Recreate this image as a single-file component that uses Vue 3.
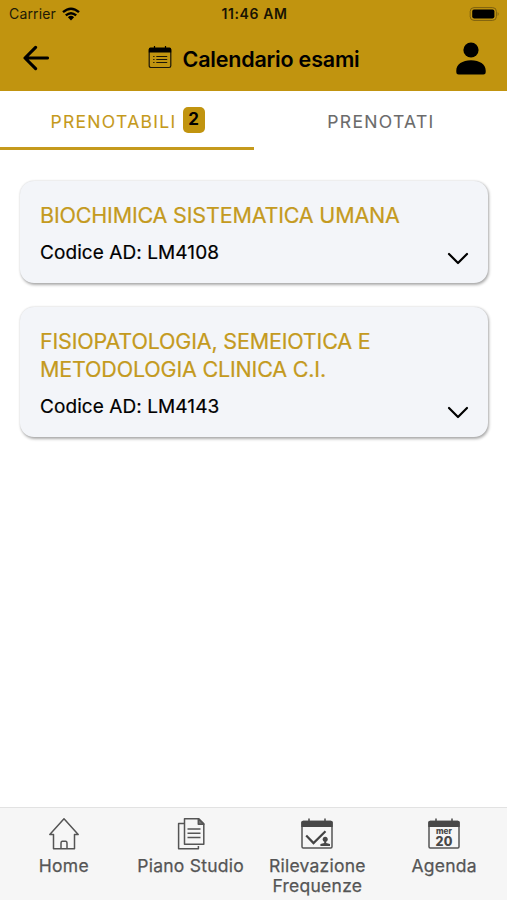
<script setup>
const exams = [
  { title: ['BIOCHIMICA SISTEMATICA UMANA'], code: 'LM4108' },
  { title: ['FISIOPATOLOGIA, SEMEIOTICA E', 'METODOLOGIA CLINICA C.I.'], code: 'LM4143' },
]
</script>

<template>
  <div class="screen">
    <header class="top">
      <div class="status">
        <div class="carrier">
          <span>Carrier</span>
          <svg width="18" height="14" viewBox="0 0 18 14" fill="none" stroke="#000" stroke-width="2.4">
            <path d="M1 5.2Q9-1.8 17 5.2" />
            <path d="M3.8 8.4Q9 3.9 14.2 8.4" />
            <path d="M9 13.4 5.9 10.2Q9 7.5 12.1 10.2Z" fill="#000" stroke="none" />
          </svg>
        </div>
        <span class="time">11:46 AM</span>
        <svg class="battery" width="31" height="14" viewBox="0 0 31 14">
          <rect x="1.2" y=".6" width="26.2" height="12.8" rx="3.8" fill="none" stroke="#7d6010" stroke-width="1" />
          <rect x="3.2" y="2.6" width="22.2" height="8.8" rx="1.8" fill="#000" />
          <path d="M28.7 5Q30.6 7 28.7 9Z" fill="#7d6010" />
        </svg>
      </div>
      <div class="bar">
        <svg class="back" width="26" height="26" viewBox="0 0 26 26" fill="none" stroke="#000" stroke-width="3.1" stroke-linecap="round" stroke-linejoin="round">
          <path d="M12.6 2.3 2 13l10.6 10.7M2.5 13h22" />
        </svg>
        <div class="heading">
          <svg width="24" height="24" viewBox="0 0 24 24">
            <path d="M6.5 0v4M17.5 0v4" stroke="#000" stroke-width="1.2" />
            <rect x="1.2" y="2.5" width="21.6" height="19" rx="1.7" fill="none" stroke="#1b1608" stroke-width="1.2" />
            <path d="M.8 6.5V3.2Q.8 1.6 2.4 1.6h19.2q1.6 0 1.6 1.6v3.3z" fill="#000" />
            <path d="M8.3 10.5h10.9M8.3 13.5h10.9M8.3 16.5h10.9M5.2 10.5h1.3M5.2 13.5h1.3M5.2 16.5h1.3" stroke="#1b1608" stroke-width="1.1" />
          </svg>
          <h1>Calendario esami</h1>
        </div>
        <svg class="user" width="30" height="33" viewBox="0 0 30 33">
          <circle cx="15" cy="8" r="7.6" />
          <path d="M.3 28.5C.3 22.4 6.4 18.2 15 18.2s14.7 4.2 14.7 10.3v1.7q0 2.3-2.3 2.3H2.6q-2.3 0-2.3-2.3z" />
        </svg>
      </div>
    </header>

    <nav class="tabs">
      <div class="tab active"><span class="label">PRENOTABILI</span><b>2</b></div>
      <div class="tab"><span class="label">PRENOTATI</span></div>
    </nav>

    <main>
      <article v-for="exam in exams" :key="exam.code" class="card">
        <h2><span v-for="line in exam.title" :key="line">{{ line }}</span></h2>
        <div class="row">
          <p>Codice AD: {{ exam.code }}</p>
          <svg width="22" height="14" viewBox="0 0 22 14" fill="none" stroke="#000" stroke-width="2.2" stroke-linecap="round" stroke-linejoin="round">
            <path d="M2 2l9 9 9-9" />
          </svg>
        </div>
      </article>
    </main>

    <footer>
      <div class="item">
        <svg width="32" height="34" viewBox="0 0 32 34" fill="none" stroke="#555" stroke-width="1.5" stroke-linejoin="round">
          <path d="M1.8 17.5 16 1.8l14.2 15.7h-3.7v14.2h-21V17.5z" />
          <path d="M13 31.7v-5.2q0-2.2 1.4-2.2h3.2q1.4 0 1.4 2.2v5.2" />
        </svg>
        <span>Home</span>
      </div>
      <div class="item">
        <svg width="32" height="34" viewBox="0 0 32 34" fill="none" stroke="#555" stroke-width="1.5" stroke-linejoin="round">
          <path d="M9.5 1.7h14.3l5 5v20.5H9.5z" />
          <path d="M23.3 1.7v5.5h5.5z" fill="#777" />
          <path d="M9.5 6.5H3.6v25.3h19.8V29M12.5 12h13M12.5 16.3h13M12.5 20.6h13" />
        </svg>
        <span>Piano Studio</span>
      </div>
      <div class="item">
        <svg width="34" height="34" viewBox="0 0 34 34" fill="none" stroke="#555">
          <rect x="2" y="4.5" width="30" height="26.5" rx="1.2" stroke-width="1.5" />
          <path d="M1.3 10V5.5Q1.3 3.7 3.1 3.7h27.8q1.8 0 1.8 1.8V10z" fill="#484848" stroke="none" />
          <path d="M9 1.5v4M25 1.5v4" stroke="#484848" stroke-width="1.5" />
          <path d="m6.2 18.5 7.3 7.6L25.5 14.3" stroke="#444" stroke-width="2.2" />
          <circle cx="25.2" cy="22.2" r="2.5" fill="#484848" stroke="none" />
          <path d="M24.2 23h2v3l3.8 1v2h-9.6v-2l3.8-1z" fill="#484848" stroke="none" />
        </svg>
        <span>Rilevazione<br>Frequenze</span>
      </div>
      <div class="item">
        <svg width="34" height="34" viewBox="0 0 34 34">
          <rect x="2" y="4.5" width="30" height="26.5" rx="1.2" fill="none" stroke="#555" stroke-width="1.5" />
          <path d="M1.3 10V5.5Q1.3 3.7 3.1 3.7h27.8q1.8 0 1.8 1.8V10z" fill="#484848" />
          <path d="M9 1.5v4M25 1.5v4" stroke="#484848" stroke-width="1.5" />
          <text x="17" y="17" class="day" textLength="16" lengthAdjust="spacingAndGlyphs">mer</text>
          <text x="17" y="29.4" class="date">20</text>
        </svg>
        <span>Agenda</span>
      </div>
    </footer>
  </div>
</template>

<style>
body { margin: 0; background: #fff; }
</style>

<style scoped>
.screen { width: 507px; height: 900px; display: flex; flex-direction: column; background: #fff; color: #000; font-family: Inter, Roboto, sans-serif; overflow: hidden; }
svg { display: block; flex: none; }
h1, h2, p { margin: 0; white-space: nowrap; }
.top { height: 91px; background: #c1940f; flex: none; }
.status { display: grid; grid-template-columns: 1fr auto 1fr; align-items: center; height: 27px; padding: 0 7px 0 9px; }
.carrier { display: flex; align-items: center; gap: 6px; color: #201a06; font-size: 14px; letter-spacing: .15px; }
.time { font-weight: 600; color: #181303; font-size: 14px; letter-spacing: .6px; }
.battery { justify-self: end; }
.bar { display: grid; grid-template-columns: 1fr auto 1fr; align-items: center; height: 62px; padding: 0 23px 0 23px; }
.heading { display: flex; align-items: center; gap: 11px; }
h1 { font-size: 21.5px; font-weight: 600; line-height: 28px; letter-spacing: -.2px; padding-top: 1px; }
.user { justify-self: end; margin-right: -2px; }
.tabs { display: grid; grid-template-columns: 254px 253px; height: 59px; flex: none; color: #6b6b6b; }
.tab { display: flex; justify-content: center; align-items: center; box-sizing: border-box; gap: 6px; padding: 1px 0 0 1px; border-bottom: 3px solid transparent; font-size: 17.5px; letter-spacing: 1.32px; -webkit-text-stroke: .1px; }
.label { padding-top: 3px; }
.tab.active { color: #c59a1c; border-color: #c59a1c; }
.tab b { width: 22px; height: 26px; line-height: 25px; border-radius: 5px; text-align: center; color: #000; background: #c1940f; font-size: 17px; letter-spacing: 0; -webkit-text-stroke: 0; }
main { display: flex; flex-direction: column; gap: 24px; padding: 31px 19px 0 20px; flex: 1; }
.card { box-sizing: border-box; padding: 20px 19px 15px 20px; border-radius: 14px; background: #f3f5f9; box-shadow: 1px 1.5px 3px rgba(0, 0, 0, .32), 0 0 2px rgba(0, 0, 0, .1); }
h2 { color: #c49a20; font-size: 21.5px; font-weight: 400; line-height: 28px; letter-spacing: -.18px; -webkit-text-stroke: .2px; }
h2 span { display: block; }
.row { display: flex; justify-content: space-between; align-items: flex-end; height: 39px; }
.row p { align-self: flex-start; padding-top: 12px; font-size: 19px; line-height: 24px; letter-spacing: .08px; -webkit-text-stroke: .2px; }
.row svg { margin-bottom: 2px; }
footer { box-sizing: border-box; display: grid; grid-template-columns: repeat(4, 1fr); height: 93px; padding-top: 9px; border-top: 1px solid #e2e2e2; background: #f6f6f6; color: #555; flex: none; }
.item { display: flex; flex-direction: column; align-items: center; gap: 5px; padding-left: 1px; text-align: center; font-size: 17.5px; line-height: 20px; letter-spacing: .25px; white-space: nowrap; -webkit-text-stroke: .25px; }
.day, .date { font-family: Inter, sans-serif; font-weight: 800; fill: #484848; text-anchor: middle; -webkit-text-stroke: 0; }
.day { font-size: 8px; letter-spacing: 0; }
.date { font-size: 12.5px; letter-spacing: .3px; }
</style>
